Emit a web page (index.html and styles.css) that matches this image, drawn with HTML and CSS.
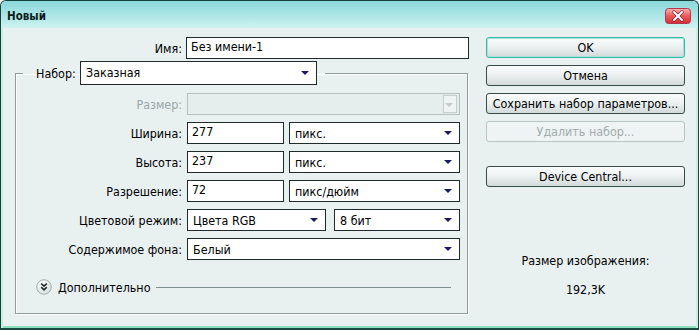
FILE: index.html
```html
<!DOCTYPE html>
<html lang="ru">
<head>
<meta charset="utf-8">
<title>Новый</title>
<link rel="stylesheet" href="styles.css">
</head>
<body>
<div class="window">
  <div class="titlebar">
    <span class="title">Новый</span>
    <span class="close">
      <svg width="26" height="16" viewBox="0 0 26 16">
        <defs>
          <linearGradient id="cg" x1="0" y1="0" x2="0" y2="1">
            <stop offset="0" stop-color="#f8b4b4"/>
            <stop offset="0.5" stop-color="#ec5a5a"/>
            <stop offset="1" stop-color="#d82a3a"/>
          </linearGradient>
        </defs>
        <rect x="0.5" y="0.5" width="25" height="15" rx="3" fill="url(#cg)" stroke="#b03848"/>
        <path d="M9 4 L17 12 M17 4 L9 12" stroke="#7a1f2a" stroke-width="3.4" stroke-linecap="round"/>
        <path d="M9 4 L17 12 M17 4 L9 12" stroke="#ffffff" stroke-width="2" stroke-linecap="round"/>
      </svg>
    </span>
  </div>
  <div class="main">
    <div class="left">
      <div class="name-row">
        <span class="lbl">Имя:</span>
        <div class="field input w-name">Без имени-1</div>
      </div>
      <fieldset class="group">
        <legend class="legend">
          <div class="legend-in">
            <span class="lbl-l">Набор:</span>
            <div class="field select w-preset">Заказная<i class="arrow"></i></div>
          </div>
        </legend>
        <div class="rows">
          <span class="lbl disabled">Размер:</span>
          <div class="field select off"><span class="offbtn"><i class="arrow grey"></i></span></div>

          <span class="lbl">Ширина:</span>
          <div class="pair">
            <div class="field input w-num">277</div>
            <div class="field select grow">пикс.<i class="arrow"></i></div>
          </div>

          <span class="lbl">Высота:</span>
          <div class="pair">
            <div class="field input w-num">237</div>
            <div class="field select grow">пикс.<i class="arrow"></i></div>
          </div>

          <span class="lbl">Разрешение:</span>
          <div class="pair">
            <div class="field input w-num">72</div>
            <div class="field select grow">пикс/дюйм<i class="arrow"></i></div>
          </div>

          <span class="lbl">Цветовой режим:</span>
          <div class="pair wide-gap">
            <div class="field select w-mode">Цвета RGB<i class="arrow"></i></div>
            <div class="field select grow">8 бит<i class="arrow"></i></div>
          </div>

          <span class="lbl">Содержимое фона:</span>
          <div class="field select">Белый<i class="arrow"></i></div>
        </div>
        <div class="advanced">
          <svg class="chev" width="16" height="16" viewBox="0 0 16 16">
            <defs>
              <radialGradient id="cv" cx="0.4" cy="0.35" r="0.7">
                <stop offset="0" stop-color="#ffffff"/>
                <stop offset="1" stop-color="#d2dbdb"/>
              </radialGradient>
            </defs>
            <circle cx="8" cy="8" r="7.3" fill="url(#cv)" stroke="#a3b0b0"/>
            <path d="M5.2 4.6 L8 7.2 L10.8 4.6 M5.2 8.2 L8 10.8 L10.8 8.2" fill="none" stroke="#1e2a2a" stroke-width="1.6"/>
          </svg>
          <span class="adv-text">Дополнительно</span>
          <span class="rule"></span>
        </div>
      </fieldset>
    </div>
    <div class="right">
      <div class="btn focus">OK</div>
      <div class="btn">Отмена</div>
      <div class="btn">Сохранить набор параметров...</div>
      <div class="btn dis">Удалить набор...</div>
      <div class="btn dc">Device Central...</div>
      <div class="info">
        <div class="info-l">Размер изображения:</div>
        <div class="info-v">192,3K</div>
      </div>
    </div>
  </div>
</div>
</body>
</html>
```

FILE: styles.css
```css
html, body {
  margin: 0;
  padding: 0;
  background: #e8f0f0;
}

body {
  font-family: "DejaVu Sans", Verdana, sans-serif;
  font-stretch: condensed;
  font-size: 12.4px;
  color: #000;
}

.window {
  width: 699px;
  height: 330px;
  box-sizing: border-box;
  border: 1px solid #17423a;
  border-bottom: 2px solid #1a4a40;
  border-radius: 6px 6px 0 0;
  background: #e8f0f0;
  display: flex;
  flex-direction: column;
  overflow: hidden;
  box-shadow: inset 2px 0 0 #c8efe2, inset -2px 0 0 #c8efe2, inset 0 -2px 0 #8ee0bd;
}

.titlebar {
  height: 27px;
  flex: none;
  display: flex;
  align-items: center;
  justify-content: space-between;
  padding: 0 7px 0 6px;
  background: linear-gradient(#8ad8da, #b8eaea 70%, #cff2f1);
  border-radius: 5px 5px 0 0;
}

.title {
  font-weight: bold;
  font-size: 11.5px;
  color: #0c1c1c;
  margin-top: 2px;
}

.close {
  display: flex;
  margin-top: 2px;
}

.main {
  flex: 1;
  display: flex;
  padding: 9px 0 0 0;
}

.left {
  width: 454px;
  margin-left: 14px;
  display: flex;
  flex-direction: column;
}

.name-row {
  display: flex;
  align-items: center;
  height: 22px;
}

.name-row .lbl {
  width: 167px;
  margin-right: 4px;
}

.lbl {
  text-align: right;
  white-space: nowrap;
}

.lbl.disabled {
  color: #9aa6a6;
}

.field {
  box-sizing: border-box;
  height: 22px;
  background: #fff;
  border: 1px solid #1f2b2b;
  padding: 0 4px;
  line-height: 18px;
  white-space: nowrap;
  position: relative;
}

.field.select {
  padding-left: 5px;
  line-height: 21px;
}

.w-name {
  width: 283px;
}

.group {
  margin: 2px 0 0 0;
  padding: 0 7px 18px 0;
  width: 453px;
  box-sizing: border-box;
  border: 1px solid #8d9b9b;
  min-inline-size: 0;
  box-shadow: 1px 1px 0 #ffffff, inset 1px 1px 0 #ffffff;
}

.legend {
  margin-left: 7px;
  padding: 0 8px 0 0;
}

.legend-in {
  display: flex;
  align-items: center;
  height: 24px;
}

.lbl-l {
  padding-left: 13px;
  width: 44px;
}

.w-preset {
  width: 237px;
  height: 24px;
  line-height: 22px;
}

.rows {
  display: grid;
  grid-template-columns: 166px 273px;
  grid-auto-rows: 22px;
  column-gap: 5px;
  row-gap: 7px;
  align-items: center;
  padding-top: 8px;
}

.pair {
  display: flex;
  gap: 5px;
}

.pair.wide-gap {
  gap: 8px;
}

.w-num {
  width: 97px;
  flex: none;
}

.w-mode {
  width: 139px;
  flex: none;
}

.grow {
  flex: 1;
}

.arrow {
  position: absolute;
  right: 7px;
  top: 8px;
  width: 0;
  height: 0;
  border-left: 4px solid transparent;
  border-right: 4px solid transparent;
  border-top: 4px solid #1b1b5e;
}

.w-preset .arrow {
  top: 9px;
}

.arrow.grey {
  border-top-color: #c4cccc;
  right: 3px;
  top: 7px;
}

.field.off {
  background: #e6eded;
  border-color: #b4bebe;
}

.offbtn {
  position: absolute;
  right: 2px;
  top: 1px;
  width: 14px;
  height: 18px;
  box-sizing: border-box;
  border: 1px solid #c4cccc;
  background: #eef3f3;
}

.advanced {
  display: flex;
  align-items: center;
  height: 16px;
  margin-top: 19px;
  padding-left: 20px;
}

.chev {
  flex: none;
}

.adv-text {
  margin-left: 6px;
}

.rule {
  flex: 1;
  height: 1px;
  background: #7f8f8f;
  margin: 0 9px 0 6px;
}

.right {
  width: 199px;
  margin-left: 17px;
  display: flex;
  flex-direction: column;
  gap: 7px;
}

.btn {
  box-sizing: border-box;
  height: 21px;
  border: 1px solid #394a4a;
  border-radius: 3px;
  background: linear-gradient(#fafcfc, #eef2f2 45%, #d3dada);
  text-align: center;
  line-height: 19px;
  white-space: nowrap;
}

.btn.focus {
  border-color: #37b8a6;
  box-shadow: inset 0 0 0 1px #a6e4da;
}

.btn.dis {
  border-color: #b9c5c5;
  background: #eef3f3;
  color: #a2acac;
}

.btn.dc {
  margin-top: 17px;
}

.info {
  margin-top: 59px;
  text-align: center;
  line-height: 16px;
}

.info-v {
  margin-top: 13px;
}
```
